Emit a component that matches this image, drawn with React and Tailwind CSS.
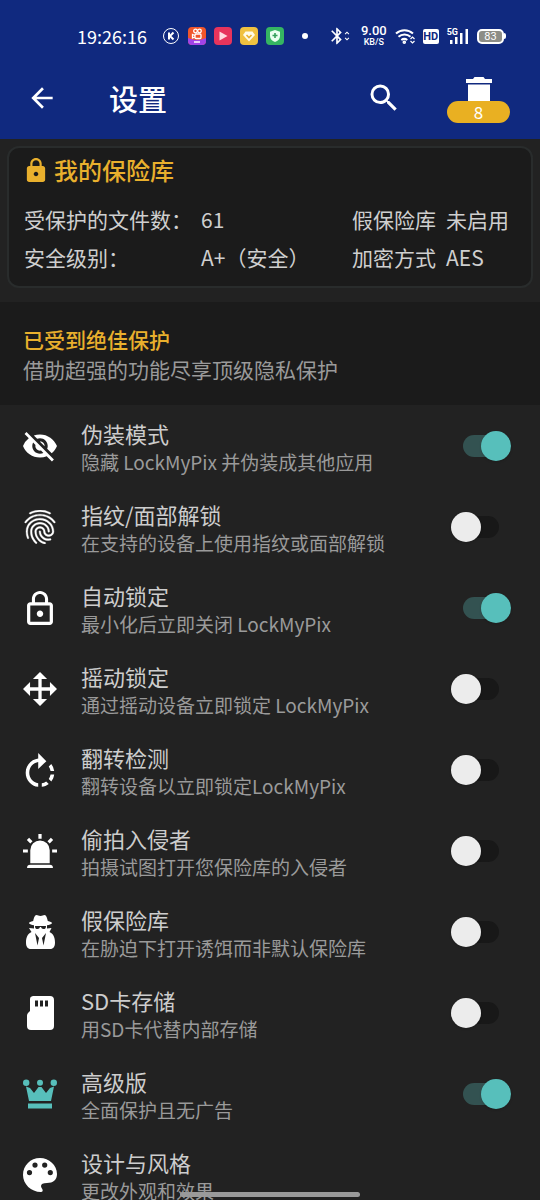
import React, { useState } from "react";
import {
  MdArrowBack,
  MdBluetooth,
  MdFingerprint,
  MdLock,
  MdLockOutline,
  MdRotateRight,
  MdSearch,
  MdUnfoldMore,
  MdVisibilityOff,
} from "react-icons/md";

const FingerprintIcon = (props) => (
  <MdFingerprint stroke="currentColor" strokeWidth="0.2" {...props} />
);

const MoveIcon = (props) => (
  <svg fill="currentColor" viewBox="1.75 1.75 20.5 20.5" {...props}>
    <path d="M13 6v5h5V7.75L22.25 12 18 16.25V13h-5v5h3.25L12 22.25 7.75 18H11v-5H6v3.25L1.75 12 6 7.75V11h5V6H7.75L12 1.75 16.25 6H13z" />
  </svg>
);

const AlarmIcon = (props) => (
  <svg fill="currentColor" viewBox="1.5 1 21 21" {...props}>
    <path d="M6 6.9 3.87 4.78l1.41-1.41L7.4 5.5 6 6.9zM13 1v3h-2V1h2zm7.13 3.78L18 6.9l-1.4-1.4 2.12-2.13 1.41 1.41zM4.5 10.5v2h-3v-2h3zm15 0h3v2h-3v-2zM6 20h12a2 2 0 0 1 2 2H4a2 2 0 0 1 2-2zm6-15a6 6 0 0 1 6 6v8H6v-8a6 6 0 0 1 6-6z" />
  </svg>
);

const SpyIcon = (props) => (
  <svg fill="currentColor" viewBox="0 0 34 34" {...props}>
    <path d="M13.500 0c1.500 0 2 1 4 1s2.500-1 4-1c1.800 0 2.800 3.500 3.300 6 2.500.5 4.200 1.200 4.200 2 0 1.600-5 2.700-11.500 2.700S6 9.600 6 8c0-.8 1.700-1.500 4.200-2 .5-2.500 1.500-6 3.300-6z" />
    <path
      fillRule="evenodd"
      d="M11 10h13v3.500l4.500-.5-2 4c3.500 1.500 5.500 5 5.500 10.500 0 4-1.500 6.500-5 6.500H8c-3.500 0-5-2.500-5-6.500C3 22 5 18.500 8.500 17l-2.500-4 5 .5zM12 11c0 2.500 1 3 2.500 3s2-.8 2.500-2h1c.5 1.200 1 2 2.500 2s2.500-.5 2.500-3zM12 18l2.500 12.500L16 23zM23 18l-2.500 12.500L19 23z"
    />
  </svg>
);

const SdIcon = (props) => (
  <svg fill="currentColor" viewBox="0 0 34 34" {...props}>
    <path
      fillRule="evenodd"
      d="M10 0h17a4 4 0 0 1 4 4v26a4 4 0 0 1-4 4H8a4 4 0 0 1-4-4V19.500c0-1 .4-2 1-2.600L7 15V3.500A3.500 3.500 0 0 1 10 0zM12 4.500v6h3v-6zm5 0v6h3v-6zm5 0v6h3v-6z"
    />
  </svg>
);

const CrownIcon = (props) => (
  <svg fill="currentColor" viewBox="0 0 34 34" {...props}>
    <circle cx="3.200" cy="5.700" r="3.200" />
    <circle cx="17" cy="5.700" r="3" />
    <circle cx="30.800" cy="5.700" r="3.200" />
    <path d="M3 9.500l4 1.500 4 5 4.500-6h3l4.500 6 4-5 4-1.500-3 14.500H6zM5 26.500h24v5H5z" />
  </svg>
);

const PaletteIcon = (props) => (
  <svg fill="currentColor" viewBox="0 0 34 34" {...props}>
    <path
      fillRule="evenodd"
      d="M17 0C7.500 0 0 7.500 0 17c0 9 8 17 18 17 1.500 0 2-1 1.500-2.500-.3-1-1.500-2-1.500-3.500 0-2 2-3 6-3 6 0 10-3 10-9C34 7 26 0 17 0zM6.500 12a2.600 2.600 0 1 1 0 5.200 2.600 2.600 0 0 1 0-5.200zm5.500-7.500a2.600 2.600 0 1 1 0 5.200 2.600 2.600 0 0 1 0-5.200zm9.700 0a2.600 2.600 0 1 1 0 5.200 2.600 2.600 0 0 1 0-5.200zM27.300 12a2.600 2.600 0 1 1 0 5.200 2.600 2.600 0 0 1 0-5.200z"
    />
  </svg>
);

const settings = [
  { id: "disguise", icon: MdVisibilityOff, viewBox: "1 1 22 22", title: "伪装模式", text: "隐藏 LockMyPix 并伪装成其他应用", on: true },
  { id: "finger", icon: FingerprintIcon, viewBox: "2 2 20 20", title: "指纹/面部解锁", text: "在支持的设备上使用指纹或面部解锁", on: false },
  { id: "autolock", icon: MdLockOutline, viewBox: "1.5 1 21 21", title: "自动锁定", text: "最小化后立即关闭 LockMyPix", on: true },
  { id: "shake", icon: MoveIcon, title: "摇动锁定", text: "通过摇动设备立即锁定 LockMyPix", on: false },
  { id: "flip", icon: MdRotateRight, viewBox: "2.5 1 19 19", title: "翻转检测", text: "翻转设备以立即锁定LockMyPix", on: false },
  { id: "intruder", icon: AlarmIcon, title: "偷拍入侵者", text: "拍摄试图打开您保险库的入侵者", on: false },
  { id: "fake", icon: SpyIcon, title: "假保险库", text: "在胁迫下打开诱饵而非默认保险库", on: false },
  { id: "sdcard", icon: SdIcon, title: "SD卡存储", text: "用SD卡代替内部存储", on: false },
  { id: "premium", icon: CrownIcon, accent: true, title: "高级版", text: "全面保护且无广告", on: true },
  { id: "design", icon: PaletteIcon, title: "设计与风格", text: "更改外观和效果" },
];

function StatusBar() {
  return (
    <div className="flex h-9 items-center justify-between pt-1 pr-[34px] pl-[77px] text-white">
      <div className="flex items-center">
        <span className="w-[85px] text-[18px] leading-5">19:26:16</span>
        <div className="flex items-center gap-2">
          <svg className="size-[18px]" viewBox="0 0 18 18" fill="none" stroke="currentColor">
            <circle cx="9" cy="9" r="7.500" strokeWidth="1" />
            <path d="M7 5.500v7M11.500 5.500L8 9l3.500 3.500" strokeWidth="2" />
          </svg>
          <svg className="size-[18px]" viewBox="0 0 18 18">
            <rect width="18" height="18" rx="4" fill="#f0562b" />
            <path d="M0 11q9 4 18 0v3a4 4 0 0 1-4 4H4a4 4 0 0 1-4-4z" fill="#a044e8" />
            <g fill="none" stroke="#fff" strokeWidth="1.300">
              <circle cx="7.500" cy="4" r="1.800" />
              <circle cx="11.500" cy="4" r="1.800" />
              <rect x="7" y="7" width="6" height="4.500" rx="1" />
              <path d="M7 8.500L4.500 7.500v3.500L7 10" />
            </g>
            <path d="M6 15h6" stroke="#fff" strokeWidth="1.500" />
          </svg>
          <svg className="size-[18px]" viewBox="0 0 18 18">
            <rect width="18" height="18" rx="4" fill="#e7345c" />
            <path d="M5.500 4.500v9l8-4.500z" fill="#ffd9df" />
          </svg>
          <svg className="size-[18px]" viewBox="0 0 18 18">
            <rect width="18" height="18" rx="4" fill="#f0c140" />
            <path d="M5.500 4.500h7L15 8l-6 6.500L3 8z" fill="#fffbe8" />
            <path d="M6.500 8L9 10.500 11.500 8" fill="none" stroke="#e8b130" strokeWidth="1.600" />
          </svg>
          <svg className="size-[18px]" viewBox="0 0 18 18">
            <rect width="18" height="18" rx="4" fill="#35b562" />
            <path d="M9 3l5 1.800V9c0 3-2 5-5 6-3-1-5-3-5-6V4.800z" fill="#eafff0" />
            <path d="M9 6v5M6.500 8.500h5" stroke="#35a05c" strokeWidth="1.600" />
          </svg>
        </div>
        <span className="ml-[18px] size-1.5 rounded-full bg-white" />
      </div>

      <div className="flex items-center gap-2">
        <div className="flex items-center">
          <MdBluetooth className="size-5" />
          <MdUnfoldMore className="-ml-1.5 size-3" />
        </div>
        <div className="text-center font-medium">
          <div className="font-['Roboto',sans-serif] text-[13px] leading-3">9.00</div>
          <div className="font-['Roboto',sans-serif] text-[9px] leading-[10px]">KB/S</div>
        </div>
        <svg className="h-4 w-5" viewBox="0 0 20 16" fill="none" stroke="currentColor" strokeWidth="2">
          <path d="M1 5.500a12.500 12.500 0 0 1 17 0M3.500 8.800a9 9 0 0 1 12 0M6.300 12a5 5 0 0 1 6 0" />
          <circle cx="9.300" cy="14.200" r=".8" />
          <path d="M15.500 11l2-2 2 2M15.500 13l2 2 2-2" strokeWidth="1.200" />
        </svg>
        <span className="w-4 rounded-xs bg-white text-center font-['Roboto',sans-serif] text-[11px] leading-[15px] font-bold text-[#10297f]">HD</span>
        <div className="flex items-end">
          <span className="self-start font-['Roboto',sans-serif] text-[9px] leading-2 font-bold">5G</span>
          <svg className="-ml-2 h-4 w-[19px]" viewBox="0 0 19 16" fill="currentColor">
            <path d="M0 12h2.500v4H0zM5 9h2.500v7H5zM10 5h2.500v11H10zM15.500 1H18v15h-2.500z" />
          </svg>
        </div>
        <div className="flex items-center">
          <span className="w-[27px] rounded-[5px] border-2 border-white bg-[#8d8d86] text-center font-['Roboto',sans-serif] text-[11px] leading-[11px]">83</span>
          <span className="h-1.5 w-0.5 rounded-r bg-white" />
        </div>
      </div>
    </div>
  );
}

function Header() {
  return (
    <header className="bg-[#10297f] pt-4">
      <StatusBar />
      <div className="flex h-[87px] items-center pt-1 pr-[30px] pl-[26px] text-white">
        <button type="button" aria-label="返回">
          <MdArrowBack className="size-8" />
        </button>
        <h1 className="ml-[51px] flex-1 text-[29px] leading-9 font-medium">设置</h1>
        <button type="button" aria-label="搜索">
          <MdSearch className="size-9" />
        </button>
        <button type="button" aria-label="回收站" className="ml-[45px] flex flex-col items-center pt-1">
          <svg className="h-6 w-[26px]" viewBox="0 0 26 24" fill="currentColor">
            <path d="M0 2h7l1.500-2h9L19 2h7v4H0zM2 7.500h22V24H2z" />
          </svg>
          <span className="w-[63px] rounded-full bg-[#e9b022] text-center text-[17px] leading-[22px]">8</span>
        </button>
      </div>
    </header>
  );
}

function VaultCard() {
  return (
    <section className="mx-[7px] mt-[7px] mb-[14px] rounded-xl border-2 border-[#292c2c] bg-[#1b1b1b] px-[15px] pt-1 pb-2.5 text-[#cfcfcf]">
      <h2 className="flex items-center gap-1.5 text-[24px] leading-9 font-medium text-[#e9b02d]">
        <MdLock className="size-6" viewBox="1.500 1 21 21" />
        我的保险库
      </h2>
      <dl className="mt-3 grid grid-cols-[177px_1fr_94px_70px] text-[21px] leading-[38px] whitespace-nowrap">
        <dt>受保护的文件数：</dt>
        <dd>61</dd>
        <dt>假保险库</dt>
        <dd>未启用</dd>
        <dt>安全级别：</dt>
        <dd>A+（安全）</dd>
        <dt>加密方式</dt>
        <dd>AES</dd>
      </dl>
    </section>
  );
}

function SettingRow({ item, checked, onChange }) {
  const Icon = item.icon;
  const extra = item.viewBox ? { viewBox: item.viewBox } : {};

  return (
    <li className="flex h-[81px] items-center pr-[29px] pl-[23px]">
      <Icon
        className={item.accent ? "size-[34px] shrink-0 text-[#57bfbb]" : "size-[34px] shrink-0 text-white"}
        {...extra}
      />
      <label htmlFor={item.id} className="ml-6 flex-1 pt-1 whitespace-nowrap">
        <span className="block text-[22px] leading-7 text-[#cdcdcd]">{item.title}</span>
        <span className="block text-[19px] leading-[30px] text-[#9a9a9a]">{item.text}</span>
      </label>
      {item.on === undefined ? (
        <button type="button" id={item.id} className="sr-only" />
      ) : (
        <input
          id={item.id}
          type="checkbox"
          role="switch"
          checked={checked}
          onChange={onChange}
          className="relative h-[30px] w-[60px] shrink-0 appearance-none before:absolute before:top-1 before:left-3 before:h-[22px] before:w-9 before:rounded-full before:bg-[#181818] after:absolute after:top-0 after:left-0 after:size-[30px] after:rounded-full after:bg-[#ececec] after:shadow checked:before:bg-[#335251] checked:after:left-[30px] checked:after:bg-[#57bfbb]"
        />
      )}
    </li>
  );
}

export default function App() {
  const [values, setValues] = useState(
    Object.fromEntries(settings.map((item) => [item.id, item.on]))
  );

  const toggle = (id) => setValues({ ...values, [id]: !values[id] });

  return (
    <div className="relative h-screen overflow-hidden bg-[#222222] font-['Noto_Sans_CJK_SC',sans-serif]">
      <Header />
      <main>
        <VaultCard />
        <section className="bg-[#1b1b1b] px-[23px] pt-[22px] pb-[21px] text-[21px] leading-[30px]">
          <h2 className="font-medium text-[#e9b02d]">已受到绝佳保护</h2>
          <p className="text-[#9a9a9a]">借助超强的功能尽享顶级隐私保护</p>
        </section>
        <ul>
          {settings.map((item) => (
            <SettingRow
              key={item.id}
              item={item}
              checked={values[item.id]}
              onChange={() => toggle(item.id)}
            />
          ))}
        </ul>
      </main>
      <div className="absolute bottom-[3px] left-1/2 h-[5px] w-[180px] -translate-x-1/2 rounded-full bg-[#9a9a9a]" />
    </div>
  );
}
